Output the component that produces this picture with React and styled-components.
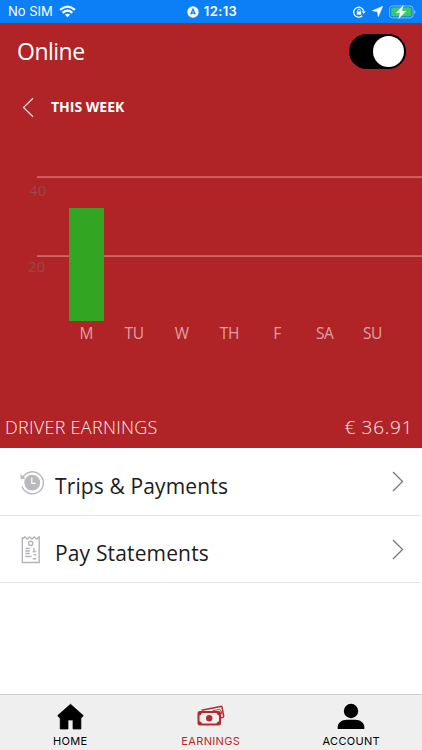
import React from "react";
import styled, { createGlobalStyle } from "styled-components";

const Global = createGlobalStyle`
  * { box-sizing: border-box; }
  body { margin: 0; background: #fff; }
`;
const Screen = styled.main`
  width: 422px; height: 750px; display: flex; flex-direction: column;
  overflow: hidden; background: #fff; color: #1c1c1c;
  font-family: "Open Sans", "Noto Sans", sans-serif;
`;
const StatusBar = styled.header`
  height: 23px; flex: none; display: grid; grid-template-columns: 1fr auto 1fr; align-items: center;
  padding: 0 6px 0 8px; background: #0b80f6; color: #fff;
  font-family: Inter, sans-serif; font-size: 13px; line-height: 23px;
  svg { display: block; }
`;
const StatusGroup = styled.div`
  display: flex; align-items: center; gap: ${(p) => p.$gap}px;
  justify-content: ${(p) => p.$align || "flex-start"};
  font-weight: ${(p) => (p.$bold ? 600 : 400)};
  letter-spacing: ${(p) => (p.$bold ? 0.4 : 0)}px;
`;
const Label = styled.span`
  display: block; white-space: nowrap; font-size: ${(p) => p.$size}px;
  line-height: ${(p) => Math.round(p.$size)}px; font-weight: ${(p) => p.$weight || 400};
  letter-spacing: ${(p) => p.$track || 0}px;
`;
const Dashboard = styled.section`
  height: 425px; flex: none; background: #b02427; color: #fff;
  display: flex; flex-direction: column;
`;
const OnlineRow = styled.div`
  height: 56px; display: flex; align-items: center; justify-content: space-between;
  padding: 0 16px 0 17px;
`;
const Toggle = styled.button`
  width: 57px; height: 35px; border: 0; border-radius: 18px; padding: 0 2px;
  background: #000; display: flex; align-items: center; justify-content: flex-end;
`;
const Knob = styled.span`
  width: 31px; height: 31px; border-radius: 50%; background: #fff;
`;
const WeekRow = styled.div`
  height: 56px; display: flex; align-items: center; gap: 16px; padding-left: 22px;
`;
const Chart = styled.div`
  margin-top: 41px; height: 168px; display: grid; grid-template-rows: 145px 23px;
`;
const Plot = styled.div`
  grid-area: 1 / 1; display: grid; grid-template-rows: 79px 66px;
`;
const Tick = styled.div`
  margin-left: 37px; height: 2px; background: linear-gradient(#c65b5d 50%, #c96769 50%);
`;
const TickText = styled.div`
  margin: ${(p) => p.$top}px 0 0 ${(p) => p.$left}px; color: #96494b;
`;
const Bars = styled.div`
  grid-area: 1 / 1; display: grid; grid-template-columns: repeat(7, 47.7px);
  padding-left: 62.5px; justify-items: center; align-items: end; z-index: 1;
`;
const Bar = styled.div`
  width: 35.4px; background: #32a622;
`;
const Days = styled.div`
  display: grid; grid-template-columns: repeat(7, 47.7px); padding-left: 62.5px;
  justify-items: center; align-items: center; color: #dfa1a2;
`;
const EarningsRow = styled.div`
  margin-top: auto; height: 42px; display: flex; justify-content: space-between;
  align-items: center; padding: 0 9px 0 5px; color: #fbeaea;
`;
const Menu = styled.nav`
  display: flex; flex-direction: column; width: 420px;
`;
const MenuRow = styled.a`
  height: ${(p) => p.$height}px; border-bottom: 1px solid #e4e4e4;
  display: grid; grid-template-columns: 35px 1fr 12px; align-items: center;
  padding: 0 16px 0 20px;
  svg { display: block; }
`;
const MenuIcon = styled.div` padding-top: 2px; `;
const MenuLabel = styled.div` padding-top: ${(p) => p.$down}px; `;
const TabBar = styled.nav`
  margin-top: auto; height: 56px; background: #efefef; border-top: 1px solid #cecece;
  display: grid; grid-template-columns: repeat(3, 140.5px);
`;
const Tab = styled.a`
  display: flex; flex-direction: column; align-items: center; justify-content: space-between;
  padding: 8px 0 3px; color: ${(p) => (p.$active ? "#b42b2e" : "#000")};
  font-family: Inter, sans-serif;
  svg { display: block; }
`;

const Wifi = () => (
  <svg width="17" height="13" viewBox="0 0 17 13" fill="none" stroke="#fff" strokeWidth="2.3">
    <path d="M1.1 4.9Q8.5-1.7 15.9 4.9M3.7 7.8Q8.5 3.5 13.3 7.8" />
    <path d="M5.9 9.7Q8.5 7.6 11.1 9.7L8.5 12.3Z" fill="#fff" stroke="none" />
  </svg>
);
const Beacon = () => (
  <svg width="12" height="12" viewBox="0 0 12 12">
    <circle cx="6" cy="6" r="5.7" fill="#fff" />
    <path d="M3.7 8.5 6 3.2 8.3 8.5M4.6 7.1H7.4" fill="none" stroke="#0b80f6" strokeWidth="1.3" />
  </svg>
);
const Lock = () => (
  <svg width="13" height="12" viewBox="0 0 13 12" fill="none" stroke="#fff">
    <path d="M9.2 9.8A5 5 0 1 1 10.6 5.2" strokeWidth="1.2" />
    <path d="M8.7 5.2H12.7L10.7 8Z" fill="#fff" stroke="none" />
    <path d="M3.8 5.4H8.2V8.7H3.8Z" fill="#fff" stroke="none" />
    <path d="M4.7 5.5V4.4a1.3 1.3 0 0 1 2.6 0V5.5" strokeWidth=".9" />
  </svg>
);
const Arrow = () => (
  <svg width="11" height="11" viewBox="0 0 11 11"><path d="M10.8.2 6.3 10.8 5.3 5.7.2 4.7Z" fill="#fff" stroke="#fff" strokeWidth=".4" strokeLinejoin="round" /></svg>
);
const Battery = () => (
  <svg width="27" height="14" viewBox="0 0 27 14">
    <rect x=".5" y=".9" width="23.5" height="12" rx="3" fill="none" stroke="#81baf0" />
    <rect x="2.2" y="2.6" width="20" height="8.7" rx="1.6" fill="#36cd68" />
    <path d="M25 5v4q1.5-.7 1.5-2T25 5" fill="#81baf0" />
    <path d="M14.4.2 7.2 7.8h4L9.6 13.8l7.4-7.7h-4.2Z" fill="#fff" stroke="#fff" strokeWidth=".3" />
  </svg>
);
const Chevron = ({ left }) => (
  <svg width="13" height="21" viewBox="0 0 13 21" fill="none">
    {left ? <path d="M11 1.2 1.5 10.5 11 19.8" stroke="#f6dada" strokeWidth="1.2" />
      : <path d="M1 1 10.5 10.5 1 20" stroke="#777" strokeWidth="1.3" />}
  </svg>
);
const History = () => (
  <svg width="24" height="25" viewBox="0 0 24 25" fill="none" stroke="#b9b9bd">
    <path d="M2.7 7.6A11 11 0 1 1 2 16.5" strokeWidth="1.4" />
    <path d="M.2 4 .8 9.3 5.5 8.6Z" fill="#b9b9bd" stroke="none" />
    <circle cx="12.2" cy="12.7" r="7.9" fill="#b9b9bd" stroke="none" />
    <path d="M11.8 7.5V13.3H15.8" stroke="#fff" strokeWidth="1.2" />
  </svg>
);
const Receipt = () => (
  <svg width="22" height="28" viewBox="0 0 22 28" fill="none" stroke="#b5b5b9" strokeWidth="1.4">
    <path d="M2.3 1V26.5H19.2V1L16.7 3 14.2 1 12 3 9.5 1 7.2 3 4.8 1 2.3 3" />
    <circle cx="10.7" cy="7.4" r="2.1" />
    <path d="M5.3 12.5H9.8M5.3 15H9.8M5.3 17.5H9.8M5.3 20.5H11.5M14 12V16.5M12.7 15.6H16.2M13.7 18.7H16.2M12.7 22.7H16.2" />
  </svg>
);
const Home = () => (
  <svg width="27" height="27" viewBox="0 0 27 27"><path d="M13.5 1.2 26.3 12.6 24.8 14.5H23.9V26H16V17H11V26H3.2V14.5H2.1L.7 12.6Z" fill="#000" stroke="#000" strokeWidth=".7" strokeLinejoin="round" /></svg>
);
const Cash = () => (
  <svg width="28" height="27" viewBox="0 0 28 27" fill="none" stroke="#b42b2e">
    <path d="M4.5 7.2 23.7 3.4Q24.8 3.2 25 4.2L26.7 13.1Q26.8 14.1 25.5 14.4L23.5 14.8" strokeWidth="1.5" />
    <path d="M15.5 7.9 22.8 6.3Q23 7.6 24.1 7.7L24.8 11.5" strokeWidth=".9" />
    <rect x="1.5" y="9" width="21.5" height="12.6" rx="1.3" strokeWidth="2" />
    <path d="M2 9.5h3.2Q4.8 12 2 12.5ZM22.5 9.5h-3.2Q19.7 12 22.5 12.5ZM2 21h3.2Q4.8 18.5 2 18ZM22.5 21h-3.2Q19.7 18.5 22.5 18Z" fill="#b42b2e" stroke="none" />
    <circle cx="12.2" cy="15.3" r="3.2" fill="#b42b2e" stroke="none" />
  </svg>
);
const Person = () => (
  <svg width="28" height="27" viewBox="0 0 28 27"><circle cx="14" cy="8" r="7.2" /><path d="M.7 26v-2.3C.7 19.5 5.5 16.7 9.5 16.7h9C22.5 16.7 27.3 19.5 27.3 23.7V26Z" /></svg>
);

const earnings = [["M", 113], ["TU", 0], ["W", 0], ["TH", 0], ["F", 0], ["SA", 0], ["SU", 0]];

export default function App() {
  return (
    <Screen>
      <Global />
      <StatusBar>
        <StatusGroup $gap={6}><span>No SIM</span><Wifi /></StatusGroup>
        <StatusGroup $gap={5} $bold><Beacon /><span>12:13</span></StatusGroup>
        <StatusGroup $gap={6} $align="flex-end"><Lock /><Arrow /><Battery /></StatusGroup>
      </StatusBar>
      <Dashboard>
        <OnlineRow><Label $size={23} $track={-0.5}>Online</Label><Toggle aria-label="Online"><Knob /></Toggle></OnlineRow>
        <WeekRow><Chevron left /><Label $size={14} $weight={700}>THIS WEEK</Label></WeekRow>
        <Chart>
          <Plot>
            <Tick /><Tick />
          </Plot>
          <Plot>
            <TickText $top={7} $left={29}><Label $size={15} $track={0.2}>40</Label></TickText>
            <TickText $top={4} $left={28}><Label $size={15} $track={0.2}>20</Label></TickText>
          </Plot>
          <Bars>{earnings.map(([day, height]) => <Bar key={day} style={{ height }} />)}</Bars>
          <Days>{earnings.map(([day]) => <Label key={day} $size={15.5} $track={-0.4}>{day}</Label>)}</Days>
        </Chart>
        <EarningsRow>
          <Label $size={18} $weight={300} $track={0.28}>DRIVER EARNINGS</Label>
          <Label $size={19} $weight={300} $track={0.7}>€ 36.91</Label>
        </EarningsRow>
      </Dashboard>
      <Menu>
        <MenuRow $height={68}><MenuIcon><History /></MenuIcon><MenuLabel $down={9}><Label $size={21} $track={0.13}>Trips &amp; Payments</Label></MenuLabel><Chevron /></MenuRow>
        <MenuRow $height={67}><MenuIcon><Receipt /></MenuIcon><MenuLabel $down={9}><Label $size={21} $track={0.15}>Pay Statements</Label></MenuLabel><Chevron /></MenuRow>
      </Menu>
      <TabBar>
        <Tab><Home /><Label $size={11} $track={0.4}>HOME</Label></Tab>
        <Tab $active><Cash /><Label $size={11} $track={0.35}>EARNINGS</Label></Tab>
        <Tab><Person /><Label $size={11} $track={0.3}>ACCOUNT</Label></Tab>
      </TabBar>
    </Screen>
  );
}
